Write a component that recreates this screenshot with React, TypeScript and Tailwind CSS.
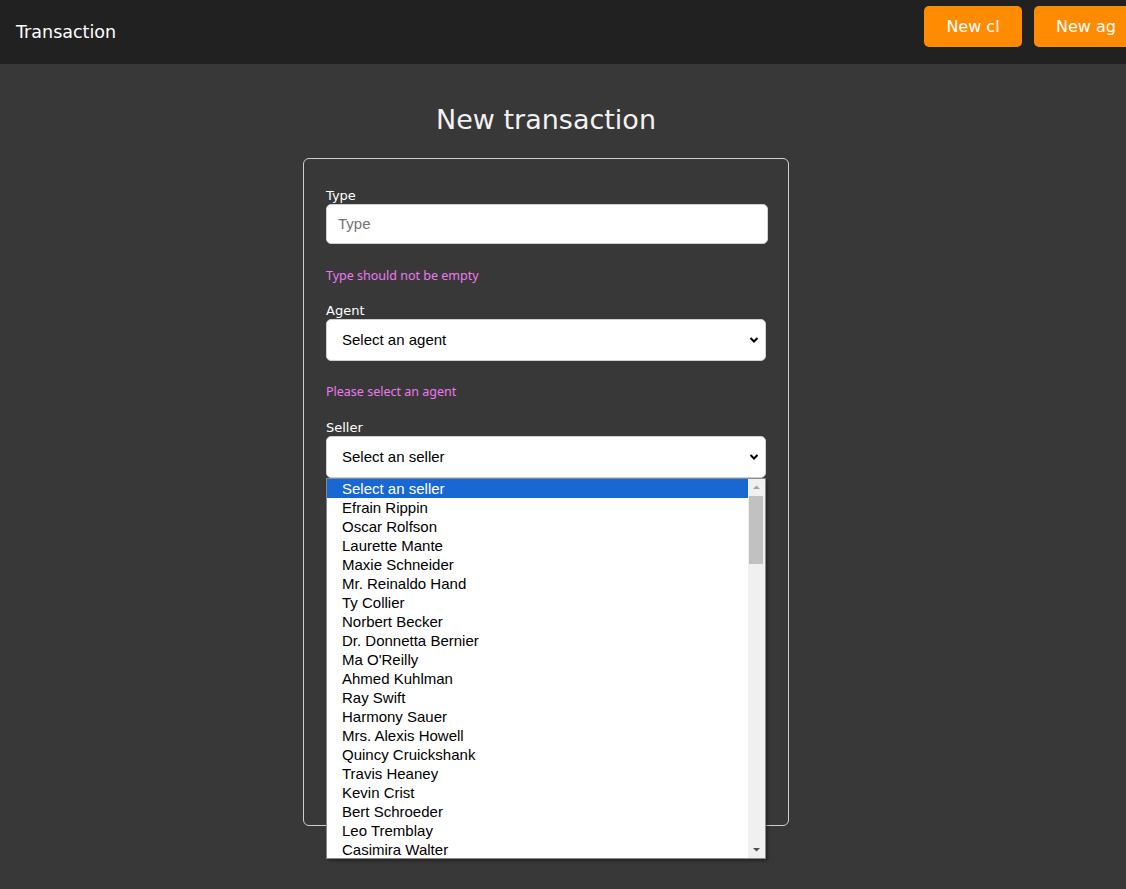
import React from "react";

const sellers = [
  "Select an seller",
  "Efrain Rippin",
  "Oscar Rolfson",
  "Laurette Mante",
  "Maxie Schneider",
  "Mr. Reinaldo Hand",
  "Ty Collier",
  "Norbert Becker",
  "Dr. Donnetta Bernier",
  "Ma O'Reilly",
  "Ahmed Kuhlman",
  "Ray Swift",
  "Harmony Sauer",
  "Mrs. Alexis Howell",
  "Quincy Cruickshank",
  "Travis Heaney",
  "Kevin Crist",
  "Bert Schroeder",
  "Leo Tremblay",
  "Casimira Walter",
];

const mont = "font-['DejaVu_Sans',sans-serif]";
const arial = "font-['Liberation_Sans',Arial,sans-serif]";

function Chevron() {
  return (
    <svg width="10" height="7" viewBox="0 0 10 7" className="absolute right-[6px] top-1/2 -translate-y-1/2">
      <path d="M1.5 1.5 L5 5 L8.5 1.5" fill="none" stroke="#000" strokeWidth="2" />
    </svg>
  );
}

function SelectBox({ text }: { text: string }) {
  return (
    <div className={`relative h-[42px] w-[440px] rounded-[5px] bg-white border border-[#d0d0d0] flex items-center pl-[15px] ${arial} text-[15px] text-black`}>
      {text}
      <Chevron />
    </div>
  );
}

export default function App() {
  return (
    <div className="min-h-[889px] bg-[#383838] overflow-hidden">
      <header className="h-[64px] bg-[#212121] flex items-center justify-between overflow-hidden">
        <div className={`pl-[16px] text-[17.5px] text-white ${mont}`}>Transaction</div>
        <div className="flex gap-[12px] mr-[-6px] shrink-0 self-start mt-[6px]">
          <div className={`h-[41px] w-[98px] rounded-[5px] bg-[#ff8c00] text-white text-[16px] flex items-center justify-center ${mont}`}>New cl</div>
          <div className={`h-[41px] w-[98px] rounded-[5px] bg-[#ff8c00] text-white text-[16px] flex items-center pl-[22px] whitespace-nowrap overflow-hidden ${mont}`}>New ag</div>
        </div>
      </header>
      <main className="flex flex-col items-center pr-[34px]">
        <h1 className={`mt-[37px] text-[27px] leading-[38px] text-[#f2f2f2] ${mont}`}>New transaction</h1>
        <div className="relative mt-[19px] w-[486px] h-[668px] border border-[#cfcfcf] rounded-[6px] pt-[29px] px-[22px]">
          <div className={`text-[13px] leading-[16px] text-white ${mont}`}>Type</div>
          <div className={`h-[40px] w-[442px] rounded-[5px] bg-white border border-[#d0d0d0] flex items-center pl-[11px] ${arial} text-[15px] text-[#757575]`}>Type</div>
          <div className="mt-[24px] text-[12.5px] leading-[16px] text-[#ee78f0] font-['Noto_Sans',sans-serif]">Type should not be empty</div>
          <div className={`mt-[19px] text-[13px] leading-[16px] text-white ${mont}`}>Agent</div>
          <SelectBox text="Select an agent" />
          <div className="mt-[23px] text-[12.5px] leading-[16px] text-[#ee78f0] font-['Noto_Sans',sans-serif]">Please select an agent</div>
          <div className={`mt-[20px] text-[13px] leading-[16px] text-white ${mont}`}>Seller</div>
          <SelectBox text="Select an seller" />
          <div className="absolute left-[22px] top-[319px] w-[440px] h-[381px] bg-white border border-[#8a8a8a] shadow-[2px_2px_3px_rgba(0,0,0,0.35)] flex">
            <div className={`flex-1 ${arial} text-[15px] text-black`}>
              {sellers.map((s, i) => (
                <div
                  key={s}
                  className={`h-[19px] leading-[19px] pl-[15px] ${i === 0 ? "bg-[#1967d2] text-white" : ""}`}
                >
                  {s}
                </div>
              ))}
            </div>
            <div className="w-[17px] bg-[#f0f0f0] relative">
              <svg width="17" height="17" viewBox="0 0 17 17" className="absolute top-0 left-0">
                <path d="M5 10 L8.5 6.5 L12 10 Z" fill="#a3a3a3" />
              </svg>
              <div className="absolute top-[17px] left-[1px] w-[14px] h-[68px] bg-[#c1c1c1]" />
              <svg width="17" height="17" viewBox="0 0 17 17" className="absolute bottom-0 left-0">
                <path d="M5 7 L8.5 10.5 L12 7 Z" fill="#505050" />
              </svg>
            </div>
          </div>
        </div>
      </main>
    </div>
  );
}
